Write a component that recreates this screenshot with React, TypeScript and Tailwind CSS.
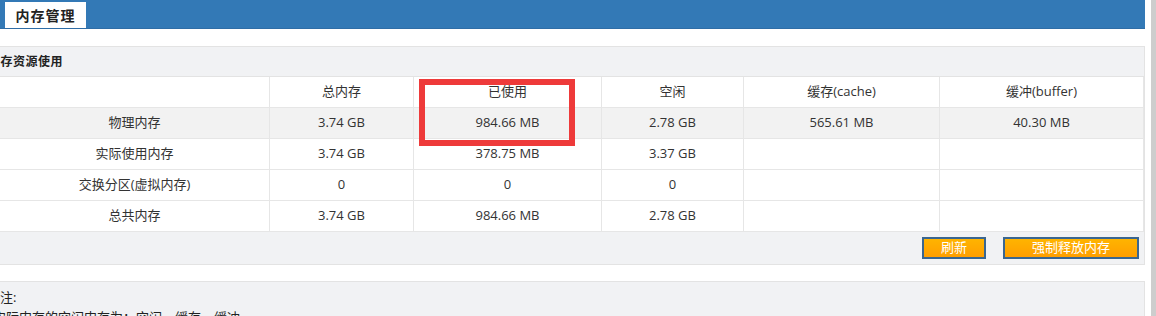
import React from 'react'

const FONT = { fontFamily: '"Open Sans", "Noto Sans CJK SC", sans-serif' }

const COLS = 'grid grid-cols-[270px_144px_188px_142px_196px_204px]'
const CELL = 'flex h-[31px] items-center justify-center border-r border-b border-[#e6e6e6] text-[13px] text-[#333]'

const HEAD = ['', '总内存', '已使用', '空闲', '缓存(cache)', '缓冲(buffer)']
const ROWS = [
  ['物理内存', '3.74 GB', '984.66 MB', '2.78 GB', '565.61 MB', '40.30 MB'],
  ['实际使用内存', '3.74 GB', '378.75 MB', '3.37 GB', '', ''],
  ['交换分区(虚拟内存)', '0', '0', '0', '', ''],
  ['总共内存', '3.74 GB', '984.66 MB', '2.78 GB', '', ''],
]

const BTN = 'flex h-[22px] items-center justify-center border-2 border-[#3a6690] bg-gradient-to-b from-[#ffb400] to-[#ff9e00] text-[13px] text-white'

export default function App() {
  return (
    <div className="relative flex h-[316px] w-[1156px] overflow-hidden bg-white" style={FONT}>
      <div className="flex w-[1145px] shrink-0 flex-col">
        {/* Header with tab */}
        <div className="flex h-[29px] shrink-0 items-end border-b border-[#2f6da6] bg-[#3379b6] pl-[5px]">
          <div className="flex h-[26px] w-[81px] items-center justify-center bg-white text-[14px] font-bold tracking-[1px] text-[#222]">
            内存管理
          </div>
        </div>

        <div className="h-[17px] shrink-0" />

        {/* Resource panel */}
        <div className="shrink-0 border-t border-r border-b border-[#e3e3e3]">
          <div className="flex h-[30px] items-center border-b border-[#e3e3e3] bg-[#f1f2f4] text-[12px] font-bold tracking-[0.5px] text-[#222]">
            <span className="-ml-[12px]">内存资源使用</span>
          </div>

          <div className={COLS}>
            {HEAD.map((h, i) => (
              <div key={i} className={`${CELL} bg-white`}>{h}</div>
            ))}
            {ROWS.map((row, r) =>
              row.map((c, i) => (
                <div key={`${r}-${i}`} className={`${CELL} ${r === 0 ? 'bg-[#f2f2f2]' : 'bg-white'}`}>{c}</div>
              ))
            )}
          </div>

          <div className="flex h-[32px] items-center justify-end gap-[17px] bg-[#f1f2f4] pr-[5px]">
            <button className={`${BTN} w-[64px]`}>刷新</button>
            <button className={`${BTN} w-[136px]`}>强制释放内存</button>
          </div>
        </div>

        <div className="h-[16px] shrink-0" />

        {/* Notes */}
        <div className="flex-1 shrink-0 border-t border-r border-[#e3e3e3] bg-[#f1f2f4] pt-[5px] text-[13px] leading-[20px] text-[#222]">
          <div className="-ml-[13px]">备注:</div>
          <div className="-ml-[7px]">实际内存的空闲内存为：空闲，缓存，缓冲</div>
        </div>
      </div>

      <div className="ml-[6px] w-[5px] shrink-0 bg-[#cdcdcd]" />

      {/* annotation */}
      <div className="absolute left-[419px] top-[79px] h-[67px] w-[156px] border-[6px] border-[#ee3a3a]" />
    </div>
  )
}
